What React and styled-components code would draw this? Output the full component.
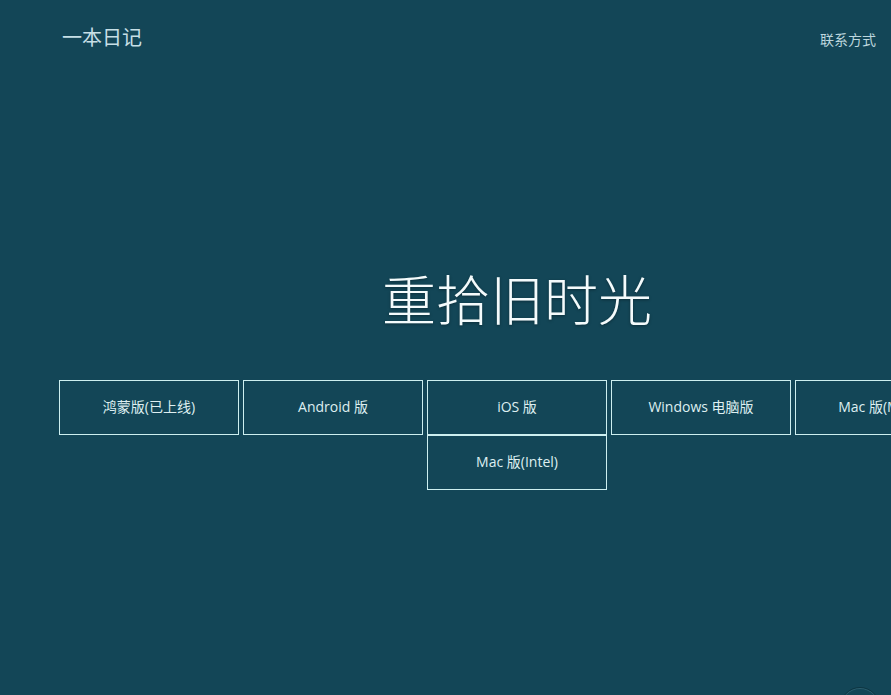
import React from "react";
import styled, { createGlobalStyle } from "styled-components";

const Global = createGlobalStyle`
  html, body {
    margin: 0;
    padding: 0;
    background: #134657;
    overflow: hidden;
  }
  body {
    font-family: "Open Sans", "Noto Sans CJK SC", sans-serif;
  }
`;

const Page = styled.div`
  position: relative;
  width: 891px;
  height: 695px;
  overflow: hidden;
  background: #134657;
`;

const Header = styled.header`
  display: flex;
  align-items: center;
  justify-content: space-between;
  height: 74px;
  padding: 0 15px 0 62px;
`;

const Logo = styled.div`
  font-family: "Noto Sans CJK SC", sans-serif;
  font-size: 20px;
  color: #c6dfe6;
  margin-top: -2px;
`;

const Contact = styled.a`
  font-family: "Noto Sans CJK SC", sans-serif;
  font-size: 14px;
  color: #bcd6dd;
  margin-top: 3px;
  text-decoration: none;
`;

const Main = styled.main`
  width: 918px;
  margin-left: 58px;
`;

const Title = styled.h1`
  margin: 197px 0 0;
  font-family: "Noto Sans CJK SC", sans-serif;
  font-weight: 300;
  font-size: 54px;
  line-height: 54px;
  color: #f4fbfc;
  text-align: center;
  text-shadow: 0 1px 3px rgba(0, 0, 0, 0.35);
`;

const Buttons = styled.div`
  display: flex;
  flex-wrap: wrap;
  justify-content: center;
  column-gap: 4px;
  margin-top: 55px;
`;

const DlButton = styled.a`
  box-sizing: border-box;
  display: flex;
  align-items: center;
  justify-content: center;
  width: 180px;
  height: 55px;
  padding-bottom: 3px;
  border: 1px solid #cdeff0;
  color: #deeff1;
  font-size: 14px;
  font-family: "Open Sans", "Noto Sans CJK SC", sans-serif;
  text-decoration: none;
  white-space: nowrap;
`;

const ScrollHint = styled.div`
  position: absolute;
  left: 840px;
  top: 687px;
  width: 38px;
  height: 38px;
  border-radius: 50%;
  border: 1px solid rgba(10, 40, 50, 0.55);
  box-shadow: inset 0 1px 0 rgba(120, 170, 185, 0.25);
`;

const items = [
  "鸿蒙版(已上线)",
  "Android 版",
  "iOS 版",
  "Windows 电脑版",
  "Mac 版(M系列)",
  "Mac 版(Intel)",
];

export default function App() {
  return (
    <Page>
      <Global />
      <Header>
        <Logo>一本日记</Logo>
        <Contact href="#">联系方式</Contact>
      </Header>
      <Main>
        <Title>重拾旧时光</Title>
        <Buttons>
          {items.map((t) => (
            <DlButton key={t} href="#">
              {t}
            </DlButton>
          ))}
        </Buttons>
      </Main>
      <ScrollHint />
    </Page>
  );
}
